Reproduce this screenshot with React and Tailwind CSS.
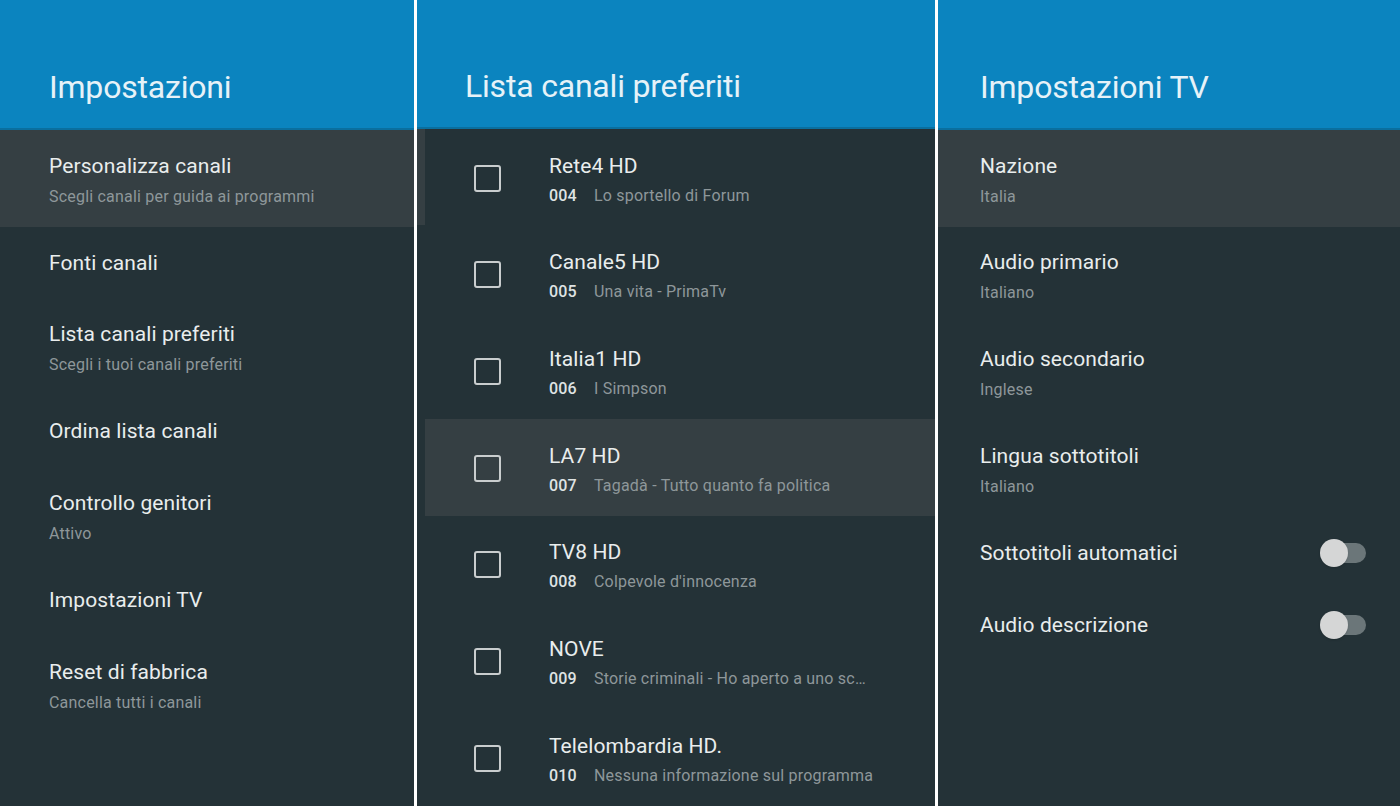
import React from 'react';

const font = { fontFamily: 'Roboto, "Liberation Sans", sans-serif' };

const leftItems = [
  { title: 'Personalizza canali', sub: 'Scegli canali per guida ai programmi', selected: true },
  { title: 'Fonti canali' },
  { title: 'Lista canali preferiti', sub: 'Scegli i tuoi canali preferiti' },
  { title: 'Ordina lista canali' },
  { title: 'Controllo genitori', sub: 'Attivo' },
  { title: 'Impostazioni TV' },
  { title: 'Reset di fabbrica', sub: 'Cancella tutti i canali' },
];

const channels = [
  { name: 'Rete4 HD', num: '004', prog: 'Lo sportello di Forum' },
  { name: 'Canale5 HD', num: '005', prog: 'Una vita - PrimaTv' },
  { name: 'Italia1 HD', num: '006', prog: 'I Simpson' },
  { name: 'LA7 HD', num: '007', prog: 'Tagadà - Tutto quanto fa politica', selected: true },
  { name: 'TV8 HD', num: '008', prog: "Colpevole d'innocenza" },
  { name: 'NOVE', num: '009', prog: 'Storie criminali - Ho aperto a uno sc…' },
  { name: 'Telelombardia HD.', num: '010', prog: 'Nessuna informazione sul programma' },
];

const tvItems = [
  { title: 'Nazione', sub: 'Italia', selected: true },
  { title: 'Audio primario', sub: 'Italiano' },
  { title: 'Audio secondario', sub: 'Inglese' },
  { title: 'Lingua sottotitoli', sub: 'Italiano' },
  { title: 'Sottotitoli automatici', toggle: true },
  { title: 'Audio descrizione', toggle: true },
];

const Header = ({ title, pad }) => (
  <div className={`h-[130px] bg-[#0b84bf] border-b-2 border-[#0a6f9f] flex items-end pb-[21px] ${pad}`}>
    <h1 className="text-[32px] leading-[40px] text-[#e6f2f8] tracking-[-0.2px]">{title}</h1>
  </div>
);

const Toggle = () => (
  <div className="relative w-[48px] h-[28px] flex items-center">
    <div className="ml-[8px] w-[38px] h-[20px] rounded-full bg-[#6b7679]" />
    <div className="absolute left-0 top-0 w-[28px] h-[28px] rounded-full bg-[#d5d6d6] shadow" />
  </div>
);

const SettingRow = ({ item, pad }) => (
  <div
    className={`flex items-center justify-between ${pad} ${item.sub ? 'h-[96.67px] pt-[4px]' : 'h-[72px]'} ${item.selected ? 'bg-[#353f43]' : ''}`}
  >
    <div className="flex flex-col">
      <span className="text-[21px] leading-[26px] text-[#e9eded] tracking-[0.1px]">{item.title}</span>
      {item.sub && <span className="text-[16px] leading-[22px] mt-[7px] text-[#8e979a] tracking-[0.2px]">{item.sub}</span>}
    </div>
    {item.toggle && <Toggle />}
  </div>
);

export default function App() {
  return (
    <div className="w-[1400px] h-[806px] overflow-hidden flex bg-white" style={font}>
      {/* Impostazioni */}
      <div className="w-[414px] flex flex-col bg-[#243237]">
        <Header title="Impostazioni" pad="pl-[49px]" />
        <div className="flex flex-col">
          {leftItems.map((it) => (
            <SettingRow key={it.title} item={it} pad="pl-[49px] pr-4" />
          ))}
        </div>
      </div>
      <div className="w-[3px] bg-white" />

      {/* Lista canali preferiti */}
      <div className="w-[518px] flex flex-col bg-[#243237]">
        <Header title="Lista canali preferiti" pad="pl-[48px]" />
        <div className="flex flex-1">
          <div className="w-[8px] flex flex-col">
            <div className="h-[96px] bg-[#353f43]" />
          </div>
          <div className="flex-1 flex flex-col">
            {channels.map((c) => (
              <div
                key={c.num}
                className={`h-[96.67px] pt-[4px] flex items-center ${c.selected ? 'bg-[#353f43]' : ''}`}
              >
                <div className="w-[124px] flex justify-center">
                  <div className="w-[27px] h-[27px] border-[2.5px] border-[#c9cdce] rounded-[3px] -mt-[3px]" />
                </div>
                <div className="flex flex-col">
                  <span className="text-[21px] leading-[26px] text-[#e9eded] tracking-[0.1px]">{c.name}</span>
                  <div className="flex items-baseline mt-[6px] text-[16px] leading-[22px] tracking-[0.2px]">
                    <span className="w-[45px] font-medium text-[#dfe3e3]">{c.num}</span>
                    <span className="text-[#8e979a]">{c.prog}</span>
                  </div>
                </div>
              </div>
            ))}
          </div>
        </div>
      </div>
      <div className="w-[3px] bg-white" />

      {/* Impostazioni TV */}
      <div className="flex-1 flex flex-col bg-[#243237]">
        <Header title="Impostazioni TV" pad="pl-[42px]" />
        <div className="flex flex-col">
          {tvItems.map((it) => (
            <SettingRow key={it.title} item={it} pad="pl-[42px] pr-[32px]" />
          ))}
        </div>
      </div>
    </div>
  );
}
